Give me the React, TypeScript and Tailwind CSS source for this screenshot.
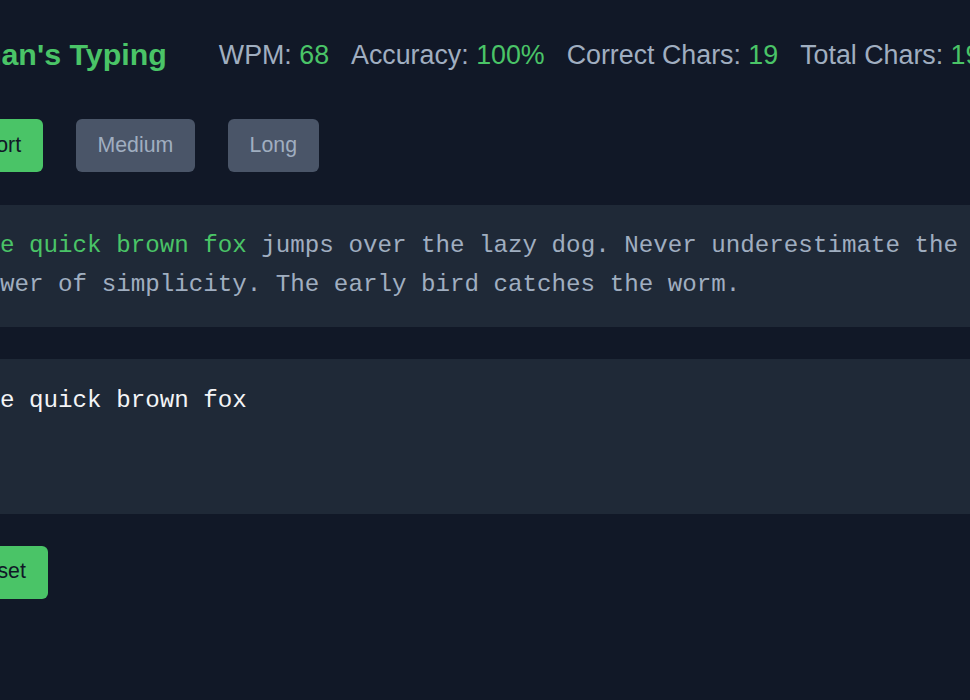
import { useState } from "react";

const PASSAGE =
  "The quick brown fox jumps over the lazy dog. Never underestimate the power of simplicity. The early bird catches the worm.";

export default function App() {
  const [typed, setTyped] = useState("The quick brown fox");
  const [mode, setMode] = useState("Short");

  const correct = typed.split("").filter((c, i) => c === PASSAGE[i]).length;
  const done = PASSAGE.slice(0, typed.length);
  const rest = PASSAGE.slice(typed.length);

  return (
    <div
      className="flex min-h-screen justify-center bg-[#111827] pt-[33px]"
      style={{ fontFamily: '"Liberation Sans", Arial, sans-serif' }}
    >
      <div className="w-[1073px] shrink-0">
        <div className="flex h-[44px] items-center gap-[52px]">
          <h1 className="ml-[4px] pb-[2px] text-[30.4px] font-bold leading-[36px] text-[#4ac467]">Ethan's Typing</h1>
          <div className="flex gap-[22px] text-[26.8px] text-[#a0aec0]">
            <span>
              WPM: <span className="text-[#4ac467]">68</span>
            </span>
            <span>
              Accuracy: <span className="text-[#4ac467]">100%</span>
            </span>
            <span>
              Correct Chars: <span className="text-[#4ac467]">{correct}</span>
            </span>
            <span>
              Total Chars: <span className="text-[#4ac467]">{typed.length}</span>
            </span>
          </div>
        </div>

        <div className="mt-[42px] flex gap-[33px]">
          {["Short", "Medium", "Long"].map((m) => (
            <button
              key={m}
              type="button"
              onClick={() => setMode(m)}
              className={
                mode === m
                  ? "h-[53px] rounded-md bg-[#4ac467] px-[21.7px] text-[21.3px] text-[#111827]"
                  : "h-[53px] rounded-md bg-[#4a5568] px-[21.7px] text-[21.3px] text-[#a0aec0]"
              }
            >
              {m}
            </button>
          ))}
        </div>

        <div
          className="mt-[33px] bg-[#1f2937] px-[22.5px] pt-[20.5px] pb-[23px] text-[24.2px] leading-[39px] text-[#a0aec0]"
          style={{ fontFamily: '"Liberation Mono", "Courier New", monospace' }}
        >
          <span className="text-[#4ac467]">{done}</span>
          {rest}
        </div>

        <textarea
          value={typed}
          onChange={(e) => setTyped(e.target.value)}
          className="mt-[32px] block h-[155px] w-full resize-none bg-[#1f2937] px-[22.5px] pt-[22px] pb-[20px] text-[24.2px] leading-[39px] text-[#f3f4f6] outline-none"
          style={{ fontFamily: '"Liberation Mono", "Courier New", monospace' }}
        />

        <button
          type="button"
          onClick={() => setTyped("")}
          className="mt-[32px] h-[53px] rounded-md bg-[#4ac467] px-[21.7px] text-[21.3px] text-[#111827]"
        >
          Reset
        </button>
      </div>
    </div>
  );
}
